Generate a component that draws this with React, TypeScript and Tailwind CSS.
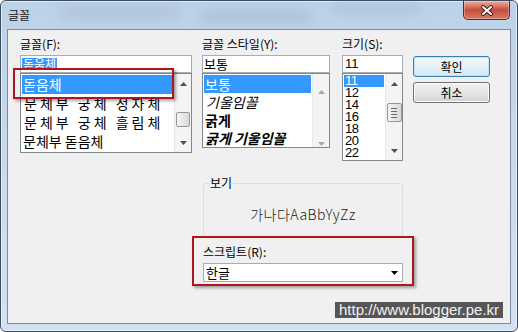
import React from "react";

function Arrow({ down = false, color }: { down?: boolean; color: string }) {
  return (
    <svg width="7" height="4" viewBox="0 0 7 4" className="block shrink-0">
      <path d={down ? "M0 0H7L3.5 4Z" : "M0 4H7L3.5 0Z"} fill={color} />
    </svg>
  );
}

function Scroll({
  pad,
  color,
  children,
}: {
  pad: string;
  color: string;
  children?: React.ReactNode;
}) {
  return (
    <div
      className={`w-[17px] h-full shrink-0 flex flex-col items-center bg-[#f4f4f4] border-l border-[#e9e9e9] ${pad}`}
    >
      <Arrow color={color} />
      <div className="flex-1 w-full flex flex-col items-center">{children}</div>
      <Arrow down color={color} />
    </div>
  );
}

function Label({ children }: { children: React.ReactNode }) {
  return <div className="h-[14px] text-[12px] leading-[14px] text-black whitespace-nowrap">{children}</div>;
}

export default function App() {
  return (
    <div className="relative w-[518px] h-[332px] overflow-hidden bg-white font-['Noto_Sans_CJK_KR',sans-serif]">
      <div className="relative w-[518px] h-[332px] rounded-[6px] border border-[#3e4c5b] bg-gradient-to-b from-[#bcd2e9] via-[#c8dbee] to-[#d2e2f2] flex flex-col overflow-hidden shadow-[inset_0_0_0_1px_rgba(255,255,255,0.55)]">
        {/* glass blur decoration */}
        <div className="absolute left-[60px] top-[4px] w-[120px] h-[14px] rounded-full bg-[#9fb2c6]/40 blur-[6px]" />
        <div className="absolute left-[200px] top-[10px] w-[110px] h-[12px] rounded-full bg-[#93a6ba]/40 blur-[6px]" />
        <div className="absolute left-[330px] top-[2px] w-[90px] h-[10px] rounded-full bg-[#9aacbf]/40 blur-[6px]" />

        {/* title bar */}
        <div className="relative h-[28px] shrink-0 flex items-start justify-between">
          <div className="pl-[7px] pt-[7px] text-[12px] leading-[14px] text-[#1a1a1a]">글꼴</div>
          <div className="w-[47px] h-[19px] mr-[7px] rounded-b-[5px] border border-t-0 border-[#5b2b22] bg-gradient-to-b from-[#eab0a2] via-[#c84a3c] to-[#d97a62] flex items-center justify-center shadow-[inset_0_0_0_1px_rgba(255,255,255,0.3)]">
            <svg width="14" height="11" viewBox="0 0 14 11">
              <path d="M3 2L11 9M11 2L3 9" stroke="#3b1b16" strokeWidth="3.8" strokeLinecap="round" />
              <path d="M3 2L11 9M11 2L3 9" stroke="#ffffff" strokeWidth="2" strokeLinecap="round" />
            </svg>
          </div>
        </div>

        {/* client area */}
        <div className="relative flex-1 mx-[6px] mb-[7px] border border-[#7d8b9b] bg-[#f0f0f0] flex flex-col">
          {/* top section */}
          <div className="flex items-start pt-[7px] pl-[12px]">
            {/* font column */}
            <div className="w-[172px] flex flex-col">
              <Label>글꼴(F):</Label>
              <div className="mt-[4px] h-[18px] border border-[#a5acb5] bg-white flex items-center px-[1px]">
                <span className="bg-[#3399ff] text-white text-[12px] leading-[12px] px-[1px]">돋움체</span>
              </div>
              <div className="h-[80px] border border-[#828790] bg-white flex">
                <div className="flex-1 p-[1px] overflow-hidden text-[14px] text-black">
                  <div className="h-[19px] leading-[19px] bg-[#3399ff] text-white pl-[1px]">돋움체</div>
                  <div className="h-[19px] leading-[19px] pl-[2px] tracking-[3px] whitespace-nowrap">문체부 궁체 정자체</div>
                  <div className="h-[19px] leading-[19px] pl-[2px] tracking-[3px] whitespace-nowrap">문체부 궁체 흘림체</div>
                  <div className="h-[19px] leading-[19px] pl-[1px] whitespace-nowrap">문체부 돋음체</div>
                </div>
                <Scroll pad="pt-[8px] pb-[7px]" color="#505050">
                  <div className="mt-[26px] w-[14px] h-[15px] rounded-[2px] border border-[#979797] bg-gradient-to-r from-[#f6f6f6] to-[#d9d9d9]" />
                </Scroll>
              </div>
            </div>

            {/* style column */}
            <div className="ml-[10px] w-[128px] flex flex-col">
              <Label>글꼴 스타일(Y):</Label>
              <div className="mt-[4px] h-[18px] border border-[#a5acb5] bg-white flex items-center px-[1px]">
                <span className="text-[13px] leading-[14px] text-black">보통</span>
              </div>
              <div className="h-[75px] border border-[#828790] bg-white flex">
                <div className="flex-1 p-[1px] overflow-hidden text-[14px] text-black">
                  <div className="h-[18px] leading-[18px] bg-[#3399ff] text-white pl-[1px]">보통</div>
                  <div className="h-[18px] leading-[18px] pl-[2px] italic whitespace-nowrap">기울임꼴</div>
                  <div className="h-[18px] leading-[18px] pl-[1px] font-bold whitespace-nowrap">굵게</div>
                  <div className="h-[18px] leading-[18px] pl-[1px] font-bold italic whitespace-nowrap">굵게 기울임꼴</div>
                </div>
                <Scroll pad="pt-[16px] pb-[1px]" color="#a8a8a8" />
              </div>
            </div>

            {/* size column */}
            <div className="ml-[12px] w-[61px] flex flex-col">
              <Label>크기(S):</Label>
              <div className="mt-[4px] h-[18px] border border-[#a5acb5] bg-white flex items-center px-[2px]">
                <span className="text-[13px] leading-[14px] text-black font-['Liberation_Sans',sans-serif]">11</span>
              </div>
              <div className="h-[88px] border border-[#828790] bg-white flex">
                <div className="flex-1 pt-[1px] px-[1px] text-[13px] leading-[12px] tracking-[-0.5px] text-black font-['Liberation_Sans',sans-serif]">
                  {["11", "12", "14", "16", "18", "20", "22"].map((n, i) => (
                    <div
                      key={n}
                      className={
                        i === 0
                          ? "h-[12px] leading-[12px] bg-[#3399ff] text-white pl-[1px]"
                          : "h-[12px] leading-[12px] pl-[1px]"
                      }
                    >
                      {n}
                    </div>
                  ))}
                </div>
                <Scroll pad="pt-[8px] pb-[7px]" color="#505050">
                  <div className="mt-[17px] w-[15px] h-[19px] rounded-[2px] border border-[#979797] bg-gradient-to-r from-[#f6f6f6] to-[#d9d9d9] flex flex-col items-center justify-center gap-[2px]">
                    <div className="w-[6px] h-[1px] bg-[#6b6b6b]" />
                    <div className="w-[6px] h-[1px] bg-[#6b6b6b]" />
                    <div className="w-[6px] h-[1px] bg-[#6b6b6b]" />
                    <div className="w-[6px] h-[1px] bg-[#6b6b6b]" />
                  </div>
                </Scroll>
              </div>
            </div>

            {/* buttons */}
            <div className="ml-[10px] mt-[19px] w-[77px] flex flex-col gap-[5px]">
              <div className="h-[21px] rounded-[3px] border border-[#3c7fb1] bg-gradient-to-b from-[#f4fafd] via-[#e4f2fa] to-[#cfe8f6] shadow-[inset_0_0_0_1px_#bfe4f8] flex items-center justify-center text-[12px] leading-[14px] text-black">
                확인
              </div>
              <div className="h-[21px] rounded-[3px] border border-[#707070] bg-gradient-to-b from-[#f2f2f2] via-[#e6e6e6] to-[#d2d2d2] shadow-[inset_0_0_0_1px_#fbfbfb] flex items-center justify-center text-[12px] leading-[14px] text-black">
                취소
              </div>
            </div>
          </div>

          {/* preview group */}
          <fieldset className="ml-[195px] mt-[16px] w-[200px] h-[60px] border border-[#d5dfe5] rounded-[3px]">
            <legend className="ml-[5px] px-[1px] text-[12px] leading-[12px] text-black">보기</legend>
            <div className="h-[44px] pt-[6px] flex items-center justify-center text-[14px] leading-[16px] text-[#222] font-light tracking-[0.5px]">
              가나다AaBbYyZz
            </div>
          </fieldset>

          {/* script */}
          <div className="ml-[195px] mt-[8px] w-[200px] flex flex-col">
            <Label>스크립트(R):</Label>
            <div className="mt-[4px] h-[19px] border border-[#a5acb5] bg-white flex items-center justify-between pl-[2px] pr-[4px]">
              <span className="text-[13px] leading-[14px] text-black">한글</span>
              <Arrow down color="#000000" />
            </div>
          </div>
        </div>
      </div>

      {/* annotation overlays */}
      <div className="absolute left-[13px] top-[68px] w-[161px] h-[31px] border-2 border-[#b0161c] shadow-[2px_2px_3px_rgba(0,0,0,0.35)]" />
      <div className="absolute left-[192px] top-[236px] w-[222px] h-[50px] border-2 border-[#b0161c] shadow-[2px_2px_3px_rgba(0,0,0,0.35)]" />
      <div className="absolute left-[335px] top-[302px] w-[168px] h-[16px] bg-[#565656] flex items-center justify-center text-[15px] leading-[16px] text-[#f2f2f2] font-['Liberation_Sans',sans-serif] whitespace-nowrap">
        http://www.blogger.pe.kr
      </div>
    </div>
  );
}
